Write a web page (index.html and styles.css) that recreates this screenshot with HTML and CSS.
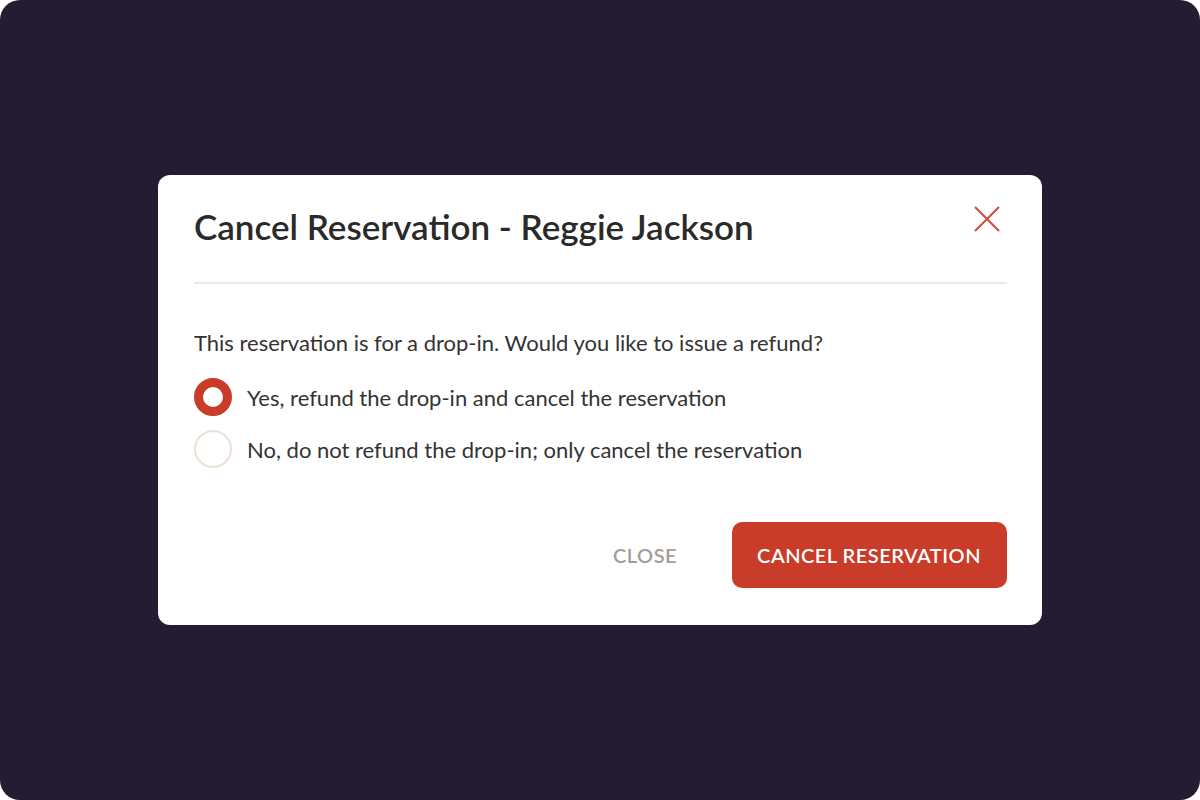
FILE: index.html
```html
<!DOCTYPE html>
<html lang="en">
<head>
  <meta charset="UTF-8" />
  <meta name="viewport" content="width=device-width, initial-scale=1.0" />
  <title>Cancel Reservation</title>
  <link rel="stylesheet" href="styles.css">
</head>
<body>
  <div class="backdrop">
    <div class="modal">
      <div class="modal-header">
        <h2>Cancel Reservation - Reggie Jackson</h2>
        <button class="close-icon" type="button" aria-label="Close">
          <svg width="26" height="26" viewBox="0 0 26 26">
            <path d="M1 1 L25 25 M25 1 L1 25" stroke="#d24a37" stroke-width="2" fill="none" />
          </svg>
        </button>
      </div>
      <p class="question">This reservation is for a drop-in. Would you like to issue a refund?</p>
      <label class="option">
        <input type="radio" name="refund" checked />
        <span class="dot"></span>
        Yes, refund the drop-in and cancel the reservation
      </label>
      <label class="option">
        <input type="radio" name="refund" />
        <span class="dot"></span>
        No, do not refund the drop-in; only cancel the reservation
      </label>
      <div class="actions">
        <button class="btn-text" type="button">Close</button>
        <button class="btn-primary" type="button">Cancel Reservation</button>
      </div>
    </div>
  </div>
</body>
</html>
```

FILE: styles.css
```css
body {
  font-family: "Source Sans Pro", Lato, "Liberation Sans", sans-serif;
  background: #fff;
  margin: 0;
}
.backdrop {
  height: 800px;
  background: #241c33;
  border-radius: 20px;
  display: flex;
  align-items: center;
  justify-content: center;
}
.modal {
  width: 884px;
  height: 450px;
  box-sizing: border-box;
  background: white;
  border-radius: 12px;
  padding: 0 35px 0 36px;
}
.modal-header {
  display: flex;
  align-items: center;
  justify-content: space-between;
  height: 107px;
  border-bottom: 2px solid #f0e6de;
}
h2 {
  margin: 0;
  font-size: 35px;
  font-weight: 600;
  color: #2a2a2a;
  padding-bottom: 5px;
}
.close-icon {
  background: none;
  border: none;
  padding: 0;
  margin-right: 7px;
  margin-bottom: 17px;
  cursor: pointer;
}
.question {
  margin: 45px 0 15px;
  font-size: 22px;
  color: #333;
}
.option {
  display: flex;
  align-items: center;
  gap: 15px;
  height: 52px;
  font-size: 22px;
  color: #333;
  cursor: pointer;
}
.option input {
  display: none;
}
.dot {
  width: 38px;
  height: 38px;
  box-sizing: border-box;
  border-radius: 50%;
  border: 2px solid #ece0d6;
  flex-shrink: 0;
}
.option input:checked + .dot {
  border: 9px solid #c83c29;
}
.actions {
  display: flex;
  justify-content: flex-end;
  align-items: center;
  gap: 55px;
  margin-top: 47px;
}
.btn-text {
  background: none;
  border: none;
  padding: 0;
  font-family: inherit;
  font-size: 20px;
  font-weight: 600;
  color: #a59d97;
  text-transform: uppercase;
  letter-spacing: 0.5px;
  cursor: pointer;
}
.btn-primary {
  height: 66px;
  padding: 0 26px 0 25px;
  background: #c83c29;
  color: white;
  border: none;
  border-radius: 10px;
  font-family: inherit;
  font-size: 20px;
  font-weight: 600;
  text-transform: uppercase;
  letter-spacing: 0.5px;
  cursor: pointer;
}
```
